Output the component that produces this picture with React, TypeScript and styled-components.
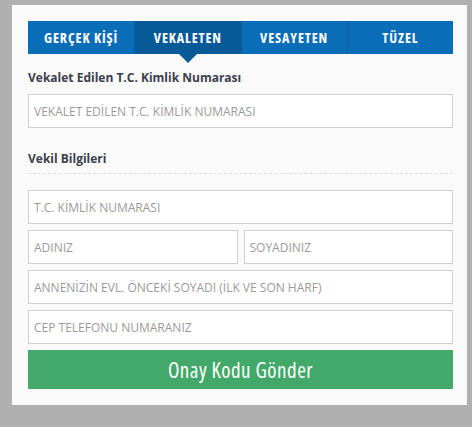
import * as React from 'react';
import styled, { createGlobalStyle } from 'styled-components';

const GlobalStyle = createGlobalStyle`
  html, body {
    margin: 0;
    padding: 0;
    background: #b0b0b0;
  }
  body {
    font-family: 'Open Sans', 'Liberation Sans', sans-serif;
  }
  * { box-sizing: border-box; }
`;

const Page = styled.div`
  padding: 5px 5px 0 12px;
  height: 427px;
`;

const Card = styled.div`
  width: 455px;
  height: 400px;
  background: #fafafa;
  padding: 16px 14px 16px 16px;
`;

const Tabs = styled.div`
  display: grid;
  grid-template-columns: repeat(4, 1fr);
  height: 33px;
  background: #0a6db7;
`;

const Tab = styled.div<{ $active?: boolean }>`
  position: relative;
  display: flex;
  align-items: center;
  justify-content: center;
  color: #fff;
  font-size: 14px;
  font-weight: 700;
  font-stretch: 80%;
  letter-spacing: 0.9px;
  background: ${(p) => (p.$active ? '#075a98' : '#0a6db7')};
  & + & {
    border-left: 1px solid #0b5f9f;
  }
  ${(p) =>
    p.$active &&
    `
    &::after {
      content: '';
      position: absolute;
      left: 50%;
      bottom: -9px;
      transform: translateX(-50%);
      border-left: 9px solid transparent;
      border-right: 9px solid transparent;
      border-top: 9px solid #075a98;
    }
  `}
`;

const Label = styled.div`
  padding-top: 16px;
  margin-bottom: 8px;
  line-height: 16px;
  font-size: 12px;
  font-weight: 700;
  color: #3b404b;
`;

const SectionTitle = styled(Label)`
  padding-top: 23px;
  padding-bottom: 6px;
  margin-bottom: 16px;
  border-bottom: 1px dashed #dcdcdc;
`;

const Fields = styled.div`
  display: flex;
  flex-direction: column;
  gap: 6px;
`;

const Row = styled.div`
  display: grid;
  grid-template-columns: 1fr 1fr;
  gap: 6px;
`;

const Input = styled.input`
  display: block;
  width: 100%;
  height: 34px;
  padding: 0 5px;
  border: 1px solid #cfcfcf;
  background: #fff;
  font-family: 'Open Sans', 'Liberation Sans', sans-serif;
  font-size: 12px;
  color: #555;
  outline: none;
  &::placeholder {
    color: #9a9a9a;
    opacity: 1;
  }
`;

const SubmitButton = styled.button`
  display: block;
  width: 100%;
  height: 39px;
  border: none;
  background: #42a96a;
  color: #fff;
  font-family: 'Open Sans', 'Liberation Sans', sans-serif;
  font-stretch: 80%;
  font-size: 21px;
  font-weight: 500;
  letter-spacing: 0.5px;
  cursor: pointer;
`;

export default function App() {
  return (
    <>
      <GlobalStyle />
      <Page>
        <Card>
          <Tabs>
            <Tab>GERÇEK KİŞİ</Tab>
            <Tab $active>VEKALETEN</Tab>
            <Tab>VESAYETEN</Tab>
            <Tab>TÜZEL</Tab>
          </Tabs>
          <Label>Vekalet Edilen T.C. Kimlik Numarası</Label>
          <Input placeholder="VEKALET EDİLEN T.C. KİMLİK NUMARASI" />
          <SectionTitle>Vekil Bilgileri</SectionTitle>
          <Fields>
            <Input placeholder="T.C. KİMLİK NUMARASI" />
            <Row>
              <Input placeholder="ADINIZ" />
              <Input placeholder="SOYADINIZ" />
            </Row>
            <Input placeholder="ANNENİZİN EVL. ÖNCEKİ SOYADI (İLK VE SON HARF)" />
            <Input placeholder="CEP TELEFONU NUMARANIZ" />
            <SubmitButton>Onay Kodu Gönder</SubmitButton>
          </Fields>
        </Card>
      </Page>
    </>
  );
}
